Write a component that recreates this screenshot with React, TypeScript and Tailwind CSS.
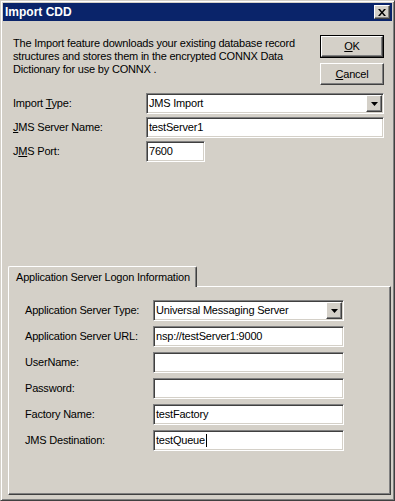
import React from 'react';

const sunken =
  'bg-white border border-t-[#808080] border-l-[#808080] border-b-white border-r-white shadow-[inset_1px_1px_0_#404040,inset_-1px_-1px_0_#d4d0c8]';
const raised =
  'bg-[#d4d0c8] border border-t-white border-l-white border-b-[#404040] border-r-[#404040] shadow-[inset_-1px_-1px_0_#808080,inset_1px_1px_0_#d4d0c8]';

function TextBox({ value, width, caret }: { value?: string; width: string; caret?: boolean }) {
  return (
    <div className={`${sunken} ${width} h-[21px] flex items-center pl-[2px]`}>
      <span className="leading-none">{value}</span>
      {caret && <span className="ml-[1px] w-px h-[13px] bg-black" />}
    </div>
  );
}

function ComboBox({ value, width }: { value: string; width: string }) {
  return (
    <div className={`${sunken} ${width} h-[21px] flex items-center justify-between pl-[2px] pr-[1px]`}>
      <span className="leading-none">{value}</span>
      <div className={`${raised} w-[16px] h-[17px] flex items-center justify-center`}>
        <svg width="7" height="4" viewBox="0 0 7 4">
          <path d="M0 0h7L3.5 4z" fill="#000" />
        </svg>
      </div>
    </div>
  );
}

function Row({ label, children, labelWidth }: { label: React.ReactNode; children: React.ReactNode; labelWidth: string }) {
  return (
    <div className="flex items-center h-[21px]">
      <div className={labelWidth}>{label}</div>
      {children}
    </div>
  );
}

export default function App() {
  return (
    <div className="w-[395px] h-[501px] bg-[#d4d0c8] border border-t-[#d4d0c8] border-l-[#d4d0c8] border-b-[#404040] border-r-[#404040] shadow-[inset_1px_1px_0_#fff,inset_-1px_-1px_0_#808080] p-[2px] flex flex-col text-[11px] tracking-[-0.2px] text-black font-['Liberation_Sans',Arial,sans-serif] select-none">
      {/* Title bar */}
      <div className="h-[18px] bg-[#0a246a] flex items-center justify-between pl-[2px] pr-[2px]">
        <span className="text-white font-bold text-[12px] tracking-normal">Import CDD</span>
        <div className={`${raised} w-[16px] h-[14px] flex items-center justify-center`}>
          <svg width="8" height="7" viewBox="0 0 8 7">
            <path d="M0 0h2l2 2.5L6 0h2L5 3.5 8 7H6L4 4.5 2 7H0l3-3.5z" fill="#000" />
          </svg>
        </div>
      </div>

      {/* Body */}
      <div className="pt-[14px] pl-[10px] pr-[8px]">
        <div className="flex justify-between h-[50px]">
          <p className="mt-[2px] leading-[13px] w-[300px]">
            The Import feature downloads your existing database record structures and stores them in the encrypted CONNX Data
            Dictionary for use by CONNX .
          </p>
          <div className="flex flex-col gap-[5px] w-[64px]">
            <div className="border border-black h-[23px]">
              <div className={`${raised} h-full flex items-center justify-center`}>
                <span><u className="underline-offset-[1px]">O</u>K</span>
              </div>
            </div>
            <div className={`${raised} h-[22px] flex items-center justify-center`}>
              <span><u className="underline-offset-[1px]">C</u>ancel</span>
            </div>
          </div>
        </div>

        <div className="mt-[8px] flex flex-col gap-[3px]">
          <Row labelWidth="w-[133px]" label={<>Import <u className="underline-offset-[1px]">T</u>ype:</>}>
            <ComboBox value="JMS Import" width="w-[238px]" />
          </Row>
          <Row labelWidth="w-[133px]" label={<><u className="underline-offset-[1px]">J</u>MS Server Name:</>}>
            <TextBox value="testServer1" width="w-[238px]" />
          </Row>
          <Row labelWidth="w-[133px]" label={<>J<u className="underline-offset-[1px]">M</u>S Port:</>}>
            <TextBox value="7600" width="w-[59px]" />
          </Row>
        </div>
      </div>

      {/* Tab control */}
      <div className="mt-[104px] ml-[5px] mr-[1px] flex flex-col">
        <div className="relative z-10 -mb-px self-start w-[189px] h-[21px] bg-[#d4d0c8] border-t border-l border-r border-t-white border-l-white border-r-[#404040] shadow-[inset_-1px_0_0_#808080] rounded-t-[2px] flex items-center pl-[7px] whitespace-nowrap">
          Application Server Logon Information
        </div>
        <div className="h-[209px] border border-t-white border-l-white border-b-[#404040] border-r-[#404040] shadow-[inset_-1px_-1px_0_#808080] pt-[13px] pl-[16px] flex flex-col gap-[5px]">
          <Row labelWidth="w-[128px]" label="Application Server Type:">
            <ComboBox value="Universal Messaging Server" width="w-[191px]" />
          </Row>
          <Row labelWidth="w-[128px]" label="Application Server URL:">
            <TextBox value="nsp://testServer1:9000" width="w-[191px]" />
          </Row>
          <Row labelWidth="w-[128px]" label="UserName:">
            <TextBox width="w-[191px]" />
          </Row>
          <Row labelWidth="w-[128px]" label="Password:">
            <TextBox width="w-[191px]" />
          </Row>
          <Row labelWidth="w-[128px]" label="Factory Name:">
            <TextBox value="testFactory" width="w-[191px]" />
          </Row>
          <Row labelWidth="w-[128px]" label="JMS Destination:">
            <TextBox value="testQueue" width="w-[191px]" caret />
          </Row>
        </div>
      </div>
    </div>
  );
}
